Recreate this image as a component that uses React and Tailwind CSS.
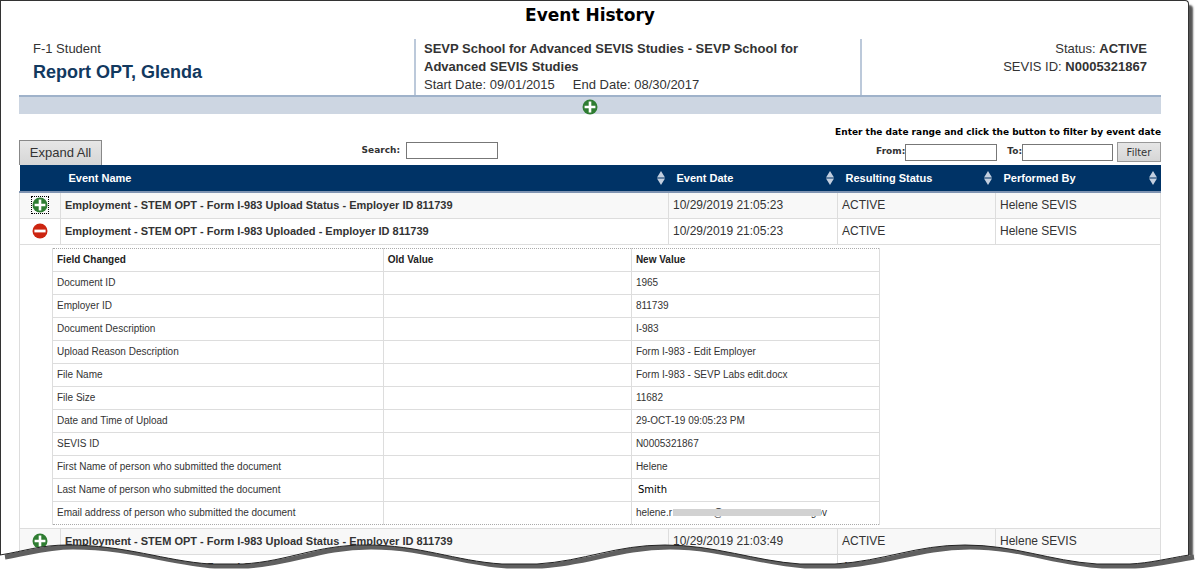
import React, { useState } from "react";

const changes = [
  { field: "Document ID", value: "1965" },
  { field: "Employer ID", value: "811739" },
  { field: "Document Description", value: "I-983" },
  { field: "Upload Reason Description", value: "Form I-983 - Edit Employer" },
  { field: "File Name", value: "Form I-983 - SEVP Labs edit.docx" },
  { field: "File Size", value: "11682" },
  { field: "Date and Time of Upload", value: "29-OCT-19 09:05:23 PM" },
  { field: "SEVIS ID", value: "N0005321867" },
  { field: "First Name of person who submitted the document", value: "Helene" },
  { field: "Last Name of person who submitted the document", value: "Smith", alt: true },
  { field: "Email address of person who submitted the document", masked: true },
];

const events = [
  {
    id: 1,
    name: "Employment - STEM OPT - Form I-983 Upload Status - Employer ID 811739",
    date: "10/29/2019 21:05:23",
    focused: true,
  },
  {
    id: 2,
    name: "Employment - STEM OPT - Form I-983 Uploaded - Employer ID 811739",
    date: "10/29/2019 21:05:23",
    changes,
  },
  {
    id: 3,
    name: "Employment - STEM OPT - Form I-983 Upload Status - Employer ID 811739",
    date: "10/29/2019 21:03:49",
  },
  {
    id: 4,
    name: "Employment - STEM OPT - Form I-983 Uploaded - Employer ID 811739",
    date: "10/29/2019 21:03:49",
  },
];

const PlusIcon = () => (
  <svg viewBox="0 0 16 16" className="block w-4 h-4" aria-hidden="true">
    <circle cx="8" cy="8" r="7.5" fill="#2f7d32" />
    <path d="M8 2.6v10.8M2.6 8h10.8" stroke="#fff" strokeWidth="2.6" />
  </svg>
);

const MinusIcon = () => (
  <svg viewBox="0 0 16 16" className="block w-4 h-4" aria-hidden="true">
    <circle cx="8" cy="8" r="7.5" fill="#cc2510" />
    <path d="M2.4 8h11.2" stroke="#fff" strokeWidth="2.8" />
  </svg>
);

const SortIcon = () => (
  <svg viewBox="0 0 8 14" className="block w-2 h-3.5" aria-hidden="true">
    <path d="M4 0l4 6.4H0zM4 14l4-6.4H0z" fill="#c3cfdf" />
  </svg>
);

const HeaderCell = ({ children }) => (
  <th scope="col" className="p-0 font-bold text-left">
    <button type="button" className="w-full flex items-center justify-between pl-2 pr-1">
      {children}
      <SortIcon />
    </button>
  </th>
);

const MaskedEmail = () => (
  <span className="relative flex w-[191px]">
    <span className="w-[77px]">helene.r</span>
    <span>@</span>
    <span className="ml-auto">gov</span>
    <span className="absolute left-[37px] right-1.5 top-[3px] h-[7px] bg-[#d2d2d2]"></span>
  </span>
);

const ChangesTable = ({ rows }) => (
  <table className="w-[828px] max-w-full table-fixed border-collapse border-y border-dotted border-[#aaa] text-[10px] leading-[14px]">
    <colgroup>
      <col className="w-[40%]" />
      <col className="w-[30%]" />
      <col className="w-[30%]" />
    </colgroup>
    <thead>
      <tr className="h-[23px] text-left text-[#222]">
        <th scope="col" className="border border-[#ddd] border-t-0 px-1 py-0">Field Changed</th>
        <th scope="col" className="border border-[#ddd] border-t-0 px-1 py-0">Old Value</th>
        <th scope="col" className="border border-[#ddd] border-t-0 px-1 py-0">New Value</th>
      </tr>
    </thead>
    <tbody>
      {rows.map((row) => (
        <tr key={row.field} className="h-[23px]">
          <td className="border-x border-t border-[#ddd] px-1 py-0">{row.field}</td>
          <td className="border-x border-t border-[#ddd] px-1 py-0"></td>
          <td className="border-x border-t border-[#ddd] px-1 py-0">
            {row.masked ? (
              <MaskedEmail />
            ) : row.alt ? (
              <span className="pl-0.5 text-black font-['DejaVu_Sans',sans-serif]">{row.value}</span>
            ) : (
              row.value
            )}
          </td>
        </tr>
      ))}
    </tbody>
  </table>
);

// Torn paper edge along the bottom of the page
const WAVE =
  "M0 14C25 10 40 4 68 4C125 4 165 20 210 23H243C290 20 315 4 366 4C420 4 455 20 502 23H537C585 20 615 4 665 4C715 4 755 20 800 23H835C885 20 915 4 965 4C1015 4 1050 20 1097 23H1130C1150 22 1165 18 1189 14";

const TornEdge = () => (
  <svg
    viewBox="0 0 1200 36"
    preserveAspectRatio="none"
    className="relative block w-full h-9 -mt-10"
    aria-hidden="true"
  >
    <defs>
      <filter id="edge-shadow" x="-1%" y="-30%" width="102%" height="160%">
        <feGaussianBlur stdDeviation="0.7" />
      </filter>
      <clipPath id="below-edge">
        <path d={WAVE + "L1200 12V36H0Z"} />
      </clipPath>
    </defs>
    <path d={WAVE + "L1200 17V36H0Z"} fill="#fff" />
    <g clipPath="url(#below-edge)">
      <path
        d={WAVE}
        transform="translate(5 2)"
        fill="none"
        stroke="#606060"
        strokeWidth="5"
        filter="url(#edge-shadow)"
      />
    </g>
    <path d={WAVE} fill="none" stroke="#222" strokeWidth="1" />
  </svg>
);

export default function App() {
  const [expanded, setExpanded] = useState([2]);

  const toggle = (id) => {
    setExpanded((ids) => (ids.includes(id) ? ids.filter((i) => i !== id) : [...ids, id]));
  };

  return (
    <div className="overflow-hidden bg-white text-[#333] font-['Liberation_Sans',Arial,sans-serif]">
      <main className="mr-[11px] border border-b-0 border-[#333] rounded-tr-sm pl-[18px] pr-[27px] shadow-[4px_5px_2px_#555]">
        <h1 className="pt-0.5 pb-3 text-center text-[17px] leading-6 font-bold text-black font-['DejaVu_Sans',Verdana,sans-serif]">
          Event History
        </h1>

        {/* Student banner */}
        <section className="flex text-[13px] leading-[18px]">
          <div className="w-[395px] pl-3.5 pt-px pb-2">
            <p>F-1 Student</p>
            <h2 className="pt-1 text-lg leading-5 font-bold text-[#12395f]">Report OPT, Glenda</h2>
          </div>
          <div className="w-[448px] border-x-2 border-[#bcc9da] px-2 py-px">
            <p className="font-bold text-[#333]">
              SEVP School for Advanced SEVIS Studies - SEVP School for Advanced SEVIS Studies
            </p>
            <p className="flex gap-[18px]">
              <span>Start Date: 09/01/2015</span>
              <span>End Date: 08/30/2017</span>
            </p>
          </div>
          <div className="flex-1 pt-px pr-3.5 text-right">
            <p>Status: <b>ACTIVE</b></p>
            <p>SEVIS ID: <b>N0005321867</b></p>
          </div>
        </section>
        <div className="h-[19px] border-t-2 border-[#9fb2ca] bg-[#cdd6e2] flex justify-center">
          <button type="button" aria-label="Show more student details" className="pt-0.5">
            <PlusIcon />
          </button>
        </div>

        {/* Toolbar */}
        <div className="pt-2.5 flex items-end text-[9px] font-['DejaVu_Sans',Verdana,sans-serif]">
          <div className="w-[30%]">
            <button
              type="button"
              className="block h-[25px] w-[83px] border border-[#888] border-b-0 bg-linear-to-b from-[#e6e6e6] to-[#d6d6d6] text-[13px] font-['Liberation_Sans',Arial,sans-serif]"
            >
              Expand All
            </button>
          </div>
          <div className="flex items-center gap-1.5 pb-1.5">
            <label htmlFor="search" className="font-bold">Search:</label>
            <input id="search" type="text" className="w-[92px] h-[17px] border border-[#777] bg-white px-1" />
          </div>
          <div className="ml-auto pb-[3px]">
            <p className="pb-0.5 text-right leading-4 font-bold text-black">
              Enter the date range and click the button to filter by event date
            </p>
            <div className="flex items-center justify-end">
              <label htmlFor="from" className="font-bold">From:</label>
              <input id="from" type="text" className="w-[92px] h-[17px] border border-[#777] bg-white px-1" />
              <label htmlFor="to" className="pl-2.5 font-bold">To:</label>
              <input id="to" type="text" className="w-[91px] h-[17px] border border-[#777] bg-white px-1" />
              <button
                type="button"
                className="ml-1 w-11 h-5 border border-[#999] bg-linear-to-b from-[#e6e6e6] to-[#d6d6d6] text-[10px]"
              >
                Filter
              </button>
            </div>
          </div>
        </div>

        {/* Events */}
        <table className="w-full table-fixed border-collapse text-xs leading-4">
          <colgroup>
            <col className="w-[41px]" />
            <col />
            <col className="w-[169px]" />
            <col className="w-[158px]" />
            <col className="w-[165px]" />
          </colgroup>
          <thead>
            <tr className="h-[27px] bg-[#003366] border-b-2 border-[#7f94b2] text-white text-[11px]">
              <th className="p-0"></th>
              <HeaderCell>Event Name</HeaderCell>
              <HeaderCell>Event Date</HeaderCell>
              <HeaderCell>Resulting Status</HeaderCell>
              <HeaderCell>Performed By</HeaderCell>
            </tr>
          </thead>
          <tbody>
            {events.map((event, i) => {
              const open = expanded.includes(event.id);
              return (
                <React.Fragment key={event.id}>
                  <tr className={i % 2 === 0 ? "h-[26px] bg-[#f8f8f8]" : "h-[26px] bg-white"}>
                    <td className="border border-[#ddd] p-0">
                      <button
                        type="button"
                        onClick={() => toggle(event.id)}
                        aria-label={open ? "Collapse event" : "Expand event"}
                        className={
                          event.focused
                            ? "block mx-auto border border-dotted border-black"
                            : "block mx-auto"
                        }
                      >
                        {open ? <MinusIcon /> : <PlusIcon />}
                      </button>
                    </td>
                    <td className="border border-[#ddd] px-1 py-0 font-bold text-[11px]">{event.name}</td>
                    <td className="border border-[#ddd] px-1 py-0">{event.date}</td>
                    <td className="border border-[#ddd] px-1 py-0">ACTIVE</td>
                    <td className="border border-[#ddd] px-1 py-0">Helene SEVIS</td>
                  </tr>
                  {open && event.changes && (
                    <tr>
                      <td colSpan={5} className="border border-[#ddd] pl-8 pr-0 py-[3px]">
                        <ChangesTable rows={event.changes} />
                      </td>
                    </tr>
                  )}
                </React.Fragment>
              );
            })}
          </tbody>
        </table>
      </main>
      <TornEdge />
    </div>
  );
}
